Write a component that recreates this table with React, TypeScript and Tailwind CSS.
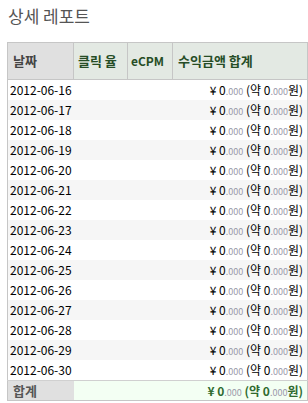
import React from "react";

const dates = [
  "2012-06-16","2012-06-17","2012-06-18","2012-06-19","2012-06-20",
  "2012-06-21","2012-06-22","2012-06-23","2012-06-24","2012-06-25",
  "2012-06-26","2012-06-27","2012-06-28","2012-06-29","2012-06-30",
];

function Amount({ bold }: { bold?: boolean }) {
  return (
    <span className={bold ? "font-bold text-[#2f6b2f]" : "text-black"}>
      ¥ 0<span className="text-[9px] leading-none font-normal text-[#9a9aaa]">.000</span> (약 0
      <span className="text-[9px] leading-none font-normal text-[#9a9aaa]">.000</span>원)
    </span>
  );
}

export default function App() {
  return (
    <div
      className="w-[308px] h-[403px] bg-white overflow-hidden"
      style={{ fontFamily: '"Noto Sans CJK KR", "Noto Sans", sans-serif' }}
    >
      <div className="pl-[8px] pt-[4px] h-[42px] text-[17px] leading-[24px] text-[#555]">
        상세 레포트
      </div>
      <table className="ml-[7px] w-[300px] table-fixed border-collapse border border-[#c6c6c6] text-[12px]">
        <colgroup>
          <col className="w-[66px]" />
          <col className="w-[54px]" />
          <col className="w-[45px]" />
          <col className="w-[135px]" />
        </colgroup>
        <thead>
          <tr className="h-[37px] text-[13px] font-bold">
            <th className="bg-[#e0e0e0] text-[#444] text-left pl-[5px] border border-[#c6c6c6]">날짜</th>
            <th className="bg-[#e3e9e3] text-[#264d26] text-left pl-[4px] border border-[#c6c6c6]">클릭 율</th>
            <th className="bg-[#e3e9e3] text-[#264d26] text-left pl-[3px] border border-[#c6c6c6] text-[12px]">eCPM</th>
            <th className="bg-[#e3e9e3] text-[#264d26] text-left pl-[5px] border border-[#c6c6c6]">수익금액 합계</th>
          </tr>
        </thead>
        <tbody>
          {dates.map((d, i) => (
            <tr key={d} className={i % 2 === 1 ? "bg-[#f6f6f6]" : "bg-white"}>
              <td className="h-[20px] p-0 pl-[2px] text-black whitespace-nowrap">
                <div className="h-[20px] leading-[20px] overflow-hidden">{d}</div>
              </td>
              <td className="h-[20px] p-0"></td>
              <td className="h-[20px] p-0"></td>
              <td className="h-[20px] p-0 pr-[4px] text-right whitespace-nowrap">
                <div className="h-[20px] leading-[20px] overflow-hidden">
                  <Amount />
                </div>
              </td>
            </tr>
          ))}
          <tr className="border-t border-[#d0d0d0]">
            <td className="h-[19px] p-0 bg-[#e0e0e0] pl-[5px] text-[13px] font-bold text-[#555]">
              <div className="h-[19px] leading-[19px] overflow-hidden">합계</div>
            </td>
            <td className="h-[19px] p-0 bg-[#f3fff3]"></td>
            <td className="h-[19px] p-0 bg-[#f3fff3]"></td>
            <td className="h-[19px] p-0 bg-[#f3fff3] text-right pr-[4px] whitespace-nowrap">
              <div className="h-[19px] leading-[19px] overflow-hidden">
                <Amount bold />
              </div>
            </td>
          </tr>
        </tbody>
      </table>
    </div>
  );
}
